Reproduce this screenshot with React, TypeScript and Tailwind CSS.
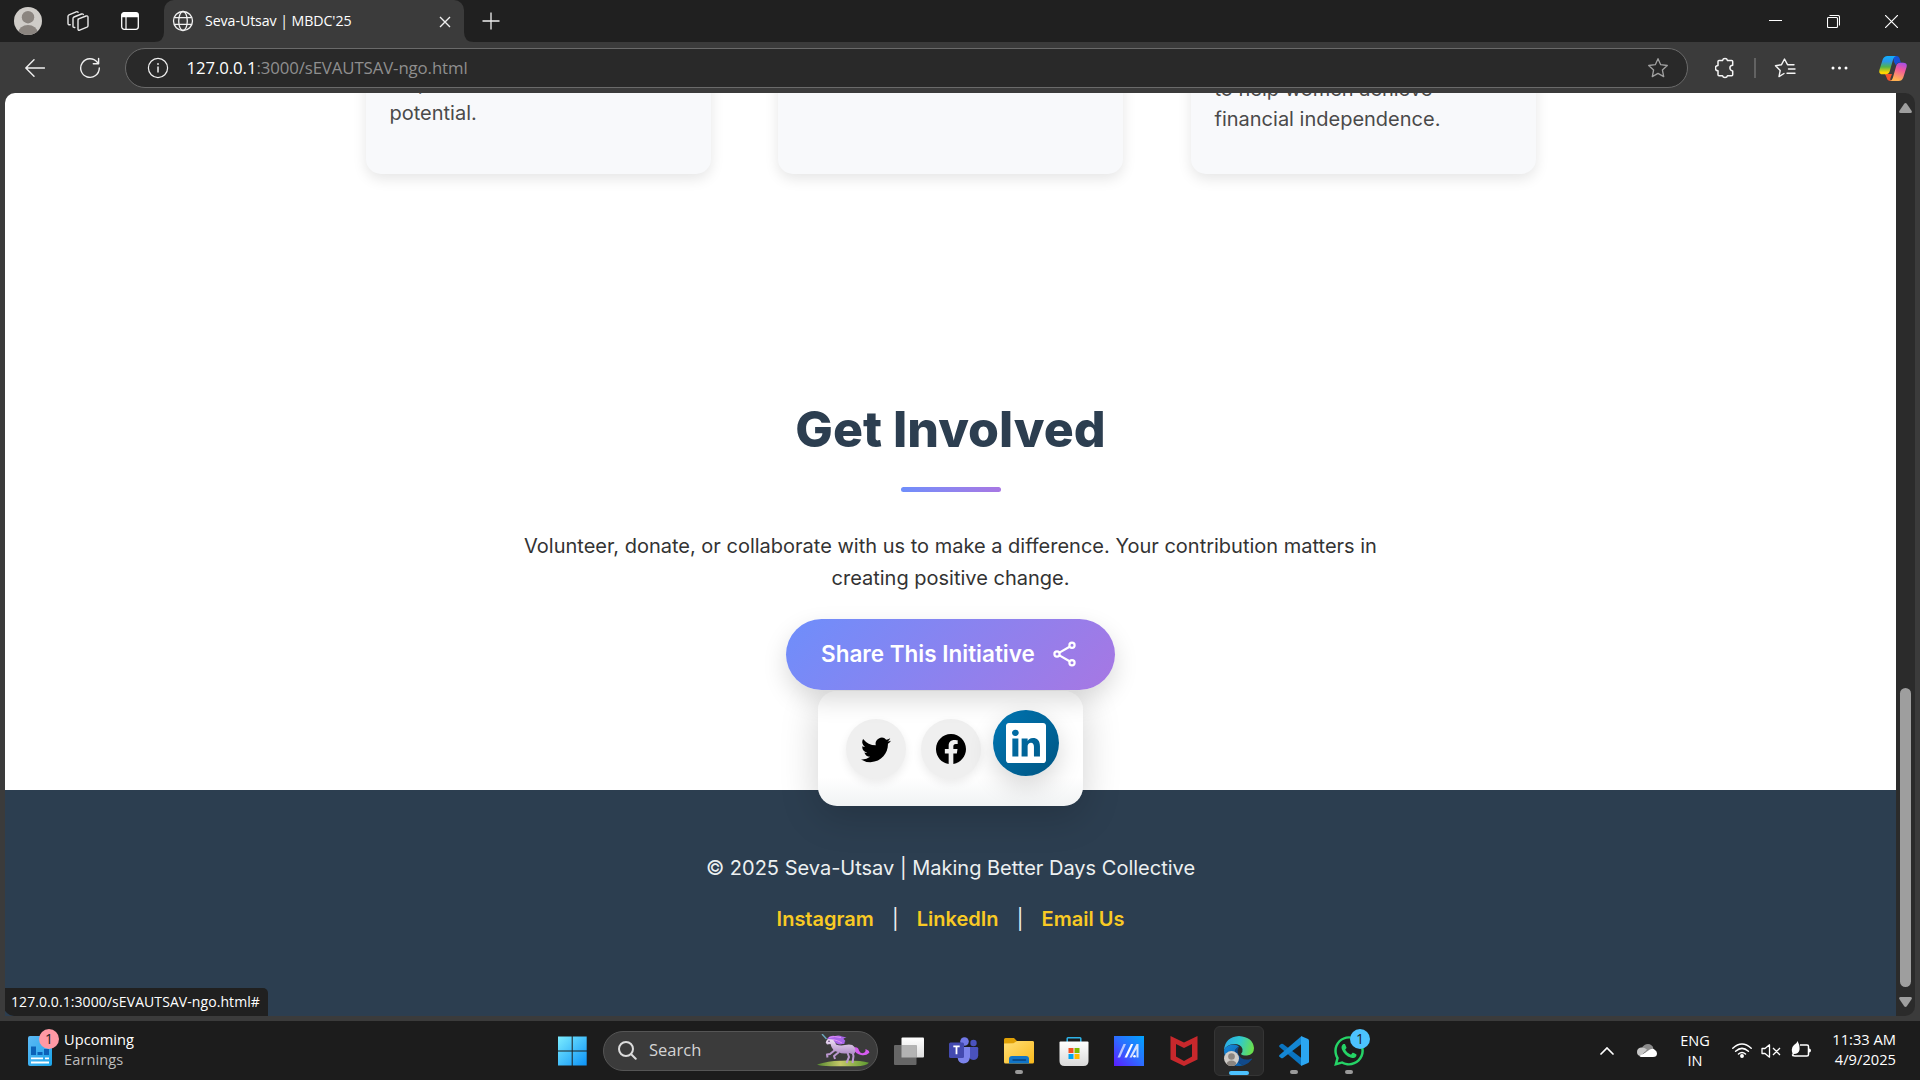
import React from "react";
import { BsTwitter, BsFacebook, BsLinkedin } from "react-icons/bs";
import { FaWhatsapp } from "react-icons/fa";

const UI = "font-['Open_Sans','Noto_Sans',sans-serif]";

function Avatar({ className }: { className: string }) {
  return (
    <svg viewBox="0 0 28 28" className={className}>
      <defs>
        <clipPath id="av">
          <circle cx="14" cy="14" r="14" />
        </clipPath>
      </defs>
      <g clipPath="url(#av)">
        <rect width="28" height="28" fill="#cfccc8" />
        <circle cx="14" cy="10.2" r="6.2" fill="#8b8580" />
        <ellipse cx="14" cy="25.5" rx="9.6" ry="7.6" fill="#8b8580" />
      </g>
    </svg>
  );
}

function WorkspacesIcon() {
  return (
    <svg viewBox="0 0 22 22" className="h-[22px] w-[22px]" fill="none" stroke="#e8e8e8" strokeWidth="1.4" strokeLinejoin="round" strokeLinecap="round">
      <path d="M11 9.2 19 6q2-.6 2 1.2v8.6q0 .9-1 1.4l-7.300 2.900q-1.700.6-1.700-1.100V10.500q0-.9.700-1.300Z" />
      <path d="M7.800 17.500q-1.800.2-1.800-1.300V8.500q0-1 1-1.500l7.500-3q1.200-.4 1.800.4" />
      <path d="M3.200 14.800Q1 15 1 13.500V6.300q0-1 1-1.500l7.200-3q1.200-.4 1.900.4" />
    </svg>
  );
}

function TabActionsIcon() {
  return (
    <svg viewBox="0 0 18 18" className="h-[18px] w-[18px]">
      <rect x=".7" y=".7" width="16.600" height="16.600" rx="2.500" fill="none" stroke="#fff" strokeWidth="1.300" />
      <path d="M.5 5.200V3Q.5.500 3 .5h12q2.500 0 2.500 2.500v2.200Z" fill="#fff" />
      <path d="M5 5v12" stroke="#fff" strokeWidth="1.200" />
    </svg>
  );
}

function GlobeIcon() {
  return (
    <svg viewBox="0 0 22 22" className="h-[22px] w-[22px]" fill="none" stroke="#f2f2f2" strokeWidth="1.300">
      <circle cx="11" cy="11" r="9.500" />
      <ellipse cx="11" cy="11" rx="4.300" ry="9.500" />
      <path d="M2.200 7.600h17.600M2.200 14.400h17.600" />
    </svg>
  );
}

function ShareIcon() {
  return (
    <svg viewBox="0 0 24 26" className="mb-px h-[26px] w-[24px]" fill="none" stroke="#fff" strokeWidth="2.200">
      <circle cx="4" cy="13" r="2.600" />
      <circle cx="19" cy="4.300" r="2.600" />
      <circle cx="19" cy="21.700" r="2.600" />
      <path d="M6.400 11.600 16.600 5.700M6.400 14.400l10.200 5.900" />
    </svg>
  );
}

function TitleBar() {
  return (
    <header className="flex h-[42px] items-start bg-[#202020]">
      <div className="flex h-[42px] w-[164px] items-center pl-[14px]">
        <Avatar className="h-[28px] w-[28px]" />
        <div className="ml-[24.500px]"><WorkspacesIcon /></div>
        <div className="ml-[32.500px]"><TabActionsIcon /></div>
      </div>
      <div className="relative flex h-[42px] w-[300px] items-center rounded-t-[10px] bg-[#3b3b3b] pl-[8px]">
        <svg viewBox="0 0 10 10" className="absolute bottom-0 -left-[10px] h-[10px] w-[10px]"><path d="M10 0v10H0Q10 10 10 0Z" fill="#3b3b3b" /></svg>
        <svg viewBox="0 0 10 10" className="absolute -right-[10px] bottom-0 h-[10px] w-[10px]"><path d="M0 0v10h10Q0 10 0 0Z" fill="#3b3b3b" /></svg>
        <GlobeIcon />
        <span className={`${UI} ml-[11px] text-[14.2px] leading-none tracking-[-0.080px] whitespace-nowrap text-white`}>Seva-Utsav | MBDC'25</span>
        <svg viewBox="0 0 12 12" className="mt-[2px] mr-[13.500px] ml-auto h-[12px] w-[12px]" stroke="#f0f0f0" strokeWidth="1.400"><path d="M1 1l10 10M11 1 1 11" /></svg>
      </div>
      <svg viewBox="0 0 18 18" className="mt-[12px] ml-[17.500px] h-[18px] w-[18px]" stroke="#f0f0f0" strokeWidth="1.300"><path d="M9 .5v17M.5 9h17" /></svg>
      <div className="mr-[22px] ml-auto flex h-[42px] items-center">
        <svg viewBox="0 0 13 13" className="h-[13px] w-[13px]" stroke="#fff" strokeWidth="1"><path d="M0 5.500h13" /></svg>
        <svg viewBox="0 0 13 13" className="ml-[45px] h-[13px] w-[13px]" fill="none" stroke="#fff" strokeWidth="1.100"><rect x=".5" y="2.500" width="10" height="10" rx="1" /><path d="M2.500.5H11q1.500 0 1.500 1.500v8.500" /></svg>
        <svg viewBox="0 0 13 13" className="ml-[45px] h-[13px] w-[13px]" stroke="#fff" strokeWidth="1.200"><path d="M0 0l13 13M13 0 0 13" /></svg>
      </div>
    </header>
  );
}

function Copilot() {
  return (
    <svg viewBox="0 0 28 27" className="h-[27px] w-[28px]">
      <defs>
        <linearGradient id="cp1" x1="0" y1="0" x2="0" y2="1">
          <stop offset="0" stopColor="#0fafff" /><stop offset=".3" stopColor="#2b96e8" /><stop offset=".6" stopColor="#52b44b" /><stop offset=".9" stopColor="#ffd400" />
        </linearGradient>
        <linearGradient id="cp2" x1="1" y1="0" x2=".7" y2="1">
          <stop offset="0" stopColor="#9a4df2" /><stop offset=".45" stopColor="#f2589c" /><stop offset="1" stopColor="#ffb152" />
        </linearGradient>
      </defs>
      <path d="M14 1h3.500q2.500 0 3.300 3l1 3.500h3q-3 .500-4.800 0-2 0-3 3L15 7Z" fill="#1650d6" />
      <path d="M6 19h7l-1.500 4q-.8 2.900 1.500 3h-1.500q-3 0-3.800-3.200Z" fill="#f4502c" />
      <path d="M8.500 1H17q-2 .3-2.800 3L10.800 16q-1 3.200-4 3.200H3.500Q-.5 19.200.4 15L3.700 4.500Q5 1 8.500 1Z" fill="url(#cp1)" />
      <path d="M19.500 26H11q2-.3 2.800-3l3.400-12q1-3.200 4-3.200h3.300q4 0 3.100 4.200l-3.300 10.500Q23 26 19.500 26Z" fill="url(#cp2)" />
    </svg>
  );
}

function Toolbar() {
  return (
    <div className="relative z-20 flex h-[51px] items-center bg-[#3b3b3b] pt-px">
      <svg viewBox="0 0 20 18" className="ml-[25px] h-[18px] w-[20px]" fill="none" stroke="#f0f0f0" strokeWidth="1.400" strokeLinecap="round" strokeLinejoin="round"><path d="M19.500 9H1M9 .8.800 9 9 17.200" /></svg>
      <svg viewBox="0 0 22 22" className="ml-[34px] h-[22px] w-[22px]" fill="none" stroke="#f0f0f0" strokeWidth="1.400" strokeLinecap="round" strokeLinejoin="round"><path d="M20.300 11a9.300 9.300 0 1 1-2-5.700L19.500 6.600M19.600 1.500v5.300h-5.300" /></svg>
      <div className="ml-[24px] flex h-[40px] w-[1563px] items-center rounded-full border border-[#6a6a6a] bg-[#292929] pl-[20.500px]">
        <svg viewBox="0 0 22 22" className="h-[22px] w-[22px]" fill="none" stroke="#f0f0f0" strokeWidth="1.200"><circle cx="11" cy="11" r="9.600" /><path d="M11 9.500v6" strokeWidth="1.500" /><circle cx="11" cy="7" r=".5" strokeWidth="1" fill="#fff" /></svg>
        <span className={`${UI} ml-[18px] text-[16.800px] leading-none tracking-[-0.100px] whitespace-nowrap text-[#8f8f8f]`}><span className="text-white">127.0.0.1</span>:3000/sEVAUTSAV-ngo.html</span>
        <svg viewBox="0 0 22 22" className="mr-[18.500px] ml-auto h-[22px] w-[22px]" fill="none" stroke="#a0a0a0" strokeWidth="1.300" strokeLinejoin="round"><path d="m11 1.700 2.700 6 6.600.8-4.900 4.500 1.300 6.600L11 16.400l-5.700 3.200L6.600 13 1.700 8.500l6.600-.8Z" /></svg>
      </div>
      <svg viewBox="0 0 20 22" className="ml-[27px] h-[22px] w-[20px]" fill="none" stroke="#f5f5f5" strokeWidth="1.500" strokeLinejoin="round"><path d="M4 3.500h3.500a2.600 2.600 0 0 1 5 0h4.200q1 0 1 1v3.800a2.800 2.800 0 0 0 0 5.600v3.800q0 1-1 1h-4.200a2.600 2.600 0 0 1-5 0H4q-1 0-1-1v-4a2.600 2.600 0 0 1 0-5.200v-4q0-1 1-1Z" /></svg>
      <div className="ml-[19px] h-[20px] w-[2px] bg-[#626262]" />
      <svg viewBox="0 0 22 22" className="ml-[18px] h-[22px] w-[22px]" fill="none" stroke="#f5f5f5" strokeWidth="1.400" strokeLinejoin="round" strokeLinecap="round"><path d="M10 16.500 5 19.600 6.200 13.500 1.500 8.700l6-1L10.500 2l3 5.700h6.500M14.500 12H21M13 16.200h8" /></svg>
      <svg viewBox="0 0 18 4" className="ml-[35px] h-[4px] w-[18px]" fill="#fff"><circle cx="2" cy="2" r="1.500" /><circle cx="8.500" cy="2" r="1.500" /><circle cx="15" cy="2" r="1.500" /></svg>
      <div className="ml-[30px]"><Copilot /></div>
    </div>
  );
}

function Card({ children }: { children?: React.ReactNode }) {
  return (
    <div className="flex h-[181px] w-[345px] flex-col justify-end rounded-[15px] bg-[#f8f9fb] px-[24px] text-[20px] leading-[30px] text-[#4a4a4a] shadow-[0_5px_14px_rgba(0,0,0,0.100)]">
      {children}
    </div>
  );
}

function Page() {
  return (
    <main className="relative flex h-[923px] w-[1891px] flex-col overflow-hidden rounded-tl-[10px] bg-white font-['Inter',sans-serif]">
      <section className="flex h-[81px] shrink-0 items-end justify-center gap-[67.500px]">
        <Card><p className="pb-[46px]">help reach their full<br />potential.</p></Card>
        <Card />
        <Card><p className="pb-[40px]">to help women achieve<br />financial independence.</p></Card>
      </section>
      <section className="flex h-[616px] shrink-0 flex-col items-center pt-[215px]">
        <h2 className="text-[50px] leading-[80px] font-extrabold text-[#2c3e50]">Get Involved</h2>
        <div className="mt-[18px] h-[5px] w-[100px] shrink-0 rounded-full bg-gradient-to-r from-[#6e8efb] to-[#a777e3]" />
        <p className="mt-[38px] w-[875px] shrink-0 text-center text-[20px] leading-[32px] text-[#333]">Volunteer, donate, or collaborate with us to make a difference. Your contribution matters in creating positive change.</p>
        <div className="relative z-10 mt-[25px] flex shrink-0 flex-col items-center">
          <button className="relative z-10 flex h-[71px] w-[329px] items-center rounded-full bg-linear-[135deg] from-[#6e8efb] to-[#a777e3] pl-[35px] text-white shadow-[0_10px_25px_rgba(0,0,0,0.150)]">
            <span className="text-[22.500px] leading-none font-semibold whitespace-nowrap">Share This Initiative</span>
            <span className="mr-[38px] ml-auto"><ShareIcon /></span>
          </button>
          <div className="mt-px mr-px flex h-[115px] w-[265px] items-center gap-[15px] rounded-[19px] bg-gradient-to-b from-white from-75% to-[#f1f3f4] pl-[28px] shadow-[0_10px_38px_rgba(0,0,0,0.180)]">
            <span className="flex h-[60px] w-[60px] items-center justify-center rounded-full bg-[#efefef] text-black shadow-[0_4px_10px_rgba(0,0,0,0.080)]"><BsTwitter className="h-[30px] w-[30px]" /></span>
            <span className="flex h-[60px] w-[60px] items-center justify-center rounded-full bg-[#efefef] text-black shadow-[0_4px_10px_rgba(0,0,0,0.080)]"><BsFacebook className="h-[30px] w-[30px]" /></span>
            <span className="-mx-[3px] mb-[12px] flex h-[66px] w-[66px] items-center justify-center rounded-full bg-gradient-to-br from-[#0077b5] to-[#005582] text-white shadow-[0_10px_26px_rgba(0,0,0,0.160)]"><BsLinkedin className="h-[40px] w-[40px]" /></span>
          </div>
        </div>
      </section>
      <footer className="flex h-[226px] shrink-0 flex-col items-center bg-[#2c3e50] pt-[62px] text-[20px] leading-[32px] text-[#ecf0f1]">
        <p>© 2025 Seva-Utsav | Making Better Days Collective</p>
        <div className="mt-[19px] flex font-semibold text-[#f9ca24]">
          <span>Instagram</span>
          <span className="w-[43px] text-center font-normal text-[#ecf0f1]">|</span>
          <span>LinkedIn</span>
          <span className="w-[43px] text-center font-normal text-[#ecf0f1]">|</span>
          <span>Email Us</span>
        </div>
      </footer>
      <div className={`${UI} absolute bottom-0 -left-px flex h-[28px] w-[264px] items-center rounded-tr-[5px] rounded-bl-[10px] bg-[#202020] pb-[2px] pl-[7px] text-[14px] tracking-[0.080px] whitespace-nowrap text-white`}>127.0.0.1:3000/sEVAUTSAV-ngo.html#</div>
    </main>
  );
}

function Scrollbar() {
  return (
    <aside className="flex w-[19px] flex-col items-center rounded-r-[10px] bg-[#2b2b2b]">
      <svg viewBox="0 0 13 10" className="mt-[10px] h-[10px] w-[13px]" fill="#9e9e9e"><path d="M5.200.8q1.300-1.500 2.600 0L12.700 8q.6 2-1.200 2h-10Q-.3 10 .3 8Z" /></svg>
      <div className="mt-[575px] h-[299px] w-[11px] rounded-full bg-[#9e9e9e]" />
      <svg viewBox="0 0 13 10" className="mt-[10px] h-[10px] w-[13px]" fill="#9e9e9e"><path d="M5.200 9.200q1.300 1.500 2.600 0L12.700 2q.6-2-1.200-2h-10Q-.3 0 .3 2Z" /></svg>
    </aside>
  );
}

function Unicorn() {
  return (
    <svg viewBox="0 0 53 33" className="h-[33px] w-[53px]">
      <defs>
        <linearGradient id="uh" x1="0" y1="0" x2="0" y2="1"><stop offset="0" stopColor="#f3e6f6" /><stop offset="1" stopColor="#b08cc8" /></linearGradient>
        <linearGradient id="ug" x1="0" y1="0" x2="1" y2="0"><stop offset="0" stopColor="#55892f" /><stop offset=".45" stopColor="#c6c868" /><stop offset="1" stopColor="#5b9a2f" /></linearGradient>
      </defs>
      <path d="M0 30.500Q12 26.500 24 26.700 42 26 52 28.800q-3 3.400-13 3.400H14Q3 32.200 0 30.500Z" fill="url(#ug)" />
      <path d="M37 13.500q4-1 5 3 1.500 4 5.500 2 1.500-1 1-3.500 4.500 2 3.500 3 1 1 0 1-3 3-8 2-5-1-7-5Z" fill="#d65cf0" />
      <path d="M18 16 13 20l-3 .5.500 3M22 18l-5 4 1 3M30 17l2 6-2.500 6M35 16l1.500 6-1 7" stroke="#bb98d0" strokeWidth="2" fill="none" strokeLinejoin="round" />
      <path d="M9.500 6.500Q12 3 15 4.500q3 1.500 4 6 4 1.500 9 .6 7-1.600 9.500 1.900 2 4-.5 7-2 .5-5-1-6 1.500-11-1-6-1-7.500-8l-3.500.5-1.300-2Z" fill="url(#uh)" />
      <path d="M10 5Q13 1 18 2q4-1 7 .5 3 0 4.500 1.500-3-.5-3 1 3 2 1 3 1 2-2 2-3 1-6-.5Q17 7.500 16 5.500Z" fill="#a866e8" />
      <path d="M12 3.500q5-2 12 0M16 5.500q5 1 9 3.500" stroke="#e290f5" strokeWidth="1" fill="none" />
      <path d="m5 0 4.500 5" stroke="#6ca8bd" strokeWidth="1.400" />
      <circle cx="12" cy="7.300" r=".8" fill="#4c2865" />
    </svg>
  );
}

function Teams() {
  return (
    <svg viewBox="0 0 30 27" className="h-[27px] w-[30px]">
      <circle cx="24.500" cy="6" r="3.200" fill="#4a52bd" />
      <circle cx="15.500" cy="4.500" r="4.300" fill="#7178e6" />
      <path d="M20 10h8q1.200 0 1.200 1.200v7Q29 22.500 25 23q-4 0-5-3Z" fill="#4a52bd" />
      <path d="M9 10h12v10q-.8 6.500-6.500 6.500Q9 26 8.500 20Z" fill="#7b83eb" />
      <rect y="5.500" width="15" height="15.500" rx="1.500" fill="#434ab0" />
      <path d="M4.300 9.300h6.400M7.500 9.300v8" stroke="#fff" strokeWidth="1.800" />
    </svg>
  );
}

function Explorer() {
  return (
    <svg viewBox="0 0 30 27" className="h-[27px] w-[30px]">
      <defs><linearGradient id="fo" x1="0" y1="0" x2="1" y2="1"><stop offset="0" stopColor="#ffdf76" /><stop offset="1" stopColor="#f9b91c" /></linearGradient></defs>
      <path d="M0 2.500Q0 1 1.500 1H10l3 3h15q2 0 2 2v3H0Z" fill="#dfa006" />
      <path d="M0 6.500 9.500 6.300 13 4h15.500Q30 4 30 5.500V25q0 1.500-1.500 1.500h-27Q0 26.500 0 25Z" fill="url(#fo)" />
      <path d="M5 26.500V22q0-3 3-3h14q3 0 3 3v4.500Z" fill="#1175c8" />
      <path d="M9 23h12.500" stroke="#07427c" strokeWidth="1.300" strokeLinecap="round" />
    </svg>
  );
}

function Store() {
  return (
    <svg viewBox="0 0 30 30" className="h-[30px] w-[30px]">
      <defs><linearGradient id="st" x1="0" y1="0" x2="0" y2="1"><stop offset="0" stopColor="#fff" /><stop offset="1" stopColor="#d9d9d9" /></linearGradient></defs>
      <path d="M8.200 6V2.600q0-.8.800-.8h12q.8 0 .8.800V6" fill="none" stroke="#2eb3e8" strokeWidth="1.500" />
      <path d="M.5 6.500Q.5 5.500 1.500 5.500h27q1 0 1 1V25q0 5-5 5h-19q-5 0-5-5Z" fill="url(#st)" />
      <path d="M9.500 12h5v5h-5Z" fill="#f25022" /><path d="M15.500 12h5v5h-5Z" fill="#7fba00" /><path d="M9.500 18h5v5h-5Z" fill="#00a4ef" /><path d="M15.500 18h5v5h-5Z" fill="#ffb900" />
    </svg>
  );
}

function MyAsus() {
  return (
    <svg viewBox="0 0 30 30" className="h-[30px] w-[30px]">
      <defs>
        <linearGradient id="ma" x1="0" y1="1" x2="1" y2="0"><stop offset="0" stopColor="#5a1cff" /><stop offset=".5" stopColor="#2d6cff" /><stop offset="1" stopColor="#00a5ff" /></linearGradient>
      </defs>
      <rect width="30" height="30" fill="url(#ma)" />
      <path d="M3.500 21.500 9.500 8h2.500L6 21.500Z" fill="#b9c8ff" />
      <path d="M10.500 21.500 17 8h2.300L13 21.500Z" fill="#fff" />
      <path d="m15.500 21.500 7-13.500h2v13.500h-2V13l-4.800 8.500Z" fill="#d5e2ff" /><circle cx="20.500" cy="20.200" r="1.300" fill="#fff" />
    </svg>
  );
}

function Edge() {
  return (
    <svg viewBox="0 0 30 30" className="h-[30px] w-[30px]">
      <defs>
        <linearGradient id="e1" x1="0" y1=".3" x2="1" y2=".5"><stop offset="0" stopColor="#2aa9e8" /><stop offset=".5" stopColor="#2fc9cf" /><stop offset="1" stopColor="#6be04a" /></linearGradient>
        <linearGradient id="e2" x1="0" y1="0" x2="1" y2="1"><stop offset="0" stopColor="#1389dc" /><stop offset="1" stopColor="#0c59a4" /></linearGradient>
      </defs>
      <path d="M0 14Q1 1 15 0q14 1 15 12 0 7-7 7.500-5 0-6-1.500 2-2 1.500-5Q17 8 10 8 3 8.500 0 14Z" fill="url(#e1)" />
      <path d="M0 14Q3 8.500 10 8.500q3.500.3 5 2-4.500 2.500-4.500 7Q11 27 20 29.200 10 32 4 25.500 0 21 0 14Z" fill="url(#e2)" />
      <path d="M15 10.500q-5 2.500-4.500 7Q11 27 20 29.200q5-1.700 8-6 0-1-1-.5-5 2-10-.700Q11.500 17 15 10.500Z" fill="#114a8b" />
    </svg>
  );
}

function AppSlot({ children, dot }: { children: React.ReactNode; dot?: boolean }) {
  return (
    <div className="relative flex h-[59px] w-[55px] items-center justify-center">
      {children}
      {dot && <span className="absolute bottom-[6px] left-[23.500px] h-[4px] w-[8px] rounded-full bg-[#9a9a9a]" />}
    </div>
  );
}

function Taskbar() {
  return (
    <footer className={`${UI} flex h-[59px] items-center bg-[#1c1c1c] text-white`}>
      <div className="flex w-[557px] items-center pl-[28px]">
        <div className="relative">
          <svg viewBox="0 0 24 30" className="h-[30px] w-[24px]">
            <defs><linearGradient id="wd" x1="0" y1="0" x2="1" y2="1"><stop offset="0" stopColor="#5db9f5" /><stop offset="1" stopColor="#1aa5ea" /></linearGradient></defs>
            <rect width="24" height="30" rx="2" fill="url(#wd)" />
            <path d="M3 10.500h5V19H3ZM9.500 16h5v3h-5ZM16 13h5v6h-5Z" fill="#0c62b8" />
            <path d="M3 22.300h12M17 22.300h4M3 26.500h18" stroke="#fff" strokeWidth="1.800" />
          </svg>
          <span className="absolute -top-[7px] left-[11px] flex h-[20px] w-[20px] items-center justify-center rounded-full bg-[#ff99a4] text-[14px] leading-none text-[#222]">1</span>
        </div>
        <div className="-mt-[4px] ml-[12px] text-[14.600px] leading-[20px] tracking-[0.080px]">
          <div>Upcoming</div>
          <div className="text-[#bdbdbd]">Earnings</div>
        </div>
      </div>
      <svg viewBox="0 0 30 30" className="h-[30px] w-[30px]">
        <defs><linearGradient id="wn" gradientUnits="userSpaceOnUse" x1="0" y1="0" x2="30" y2="30"><stop offset="0" stopColor="#7fefff" /><stop offset="1" stopColor="#0a91f7" /></linearGradient></defs>
        <path d="M1 .5h13.700V14.500H1ZM15.700.5h14v14h-14ZM1 15.500h13.700v14H1ZM15.700 15.500h14v14h-14Z" fill="url(#wn)" />
      </svg>
      <div className="ml-[16px] flex h-[40px] w-[275px] items-center rounded-full border border-[#555] bg-[#3b3b3b] pl-[14px]">
        <svg viewBox="0 0 19 19" className="h-[19px] w-[19px]" fill="none" stroke="#dcdcdc" strokeWidth="2" strokeLinecap="round"><circle cx="8" cy="8" r="7" /><path d="m13.200 13.200 4.500 4.500" /></svg>
        <span className="ml-[12px] text-[16.500px] tracking-[0px] text-[#d4d4d4]">Search</span>
        <div className="mr-[7px] ml-auto"><Unicorn /></div>
      </div>
      <div className="ml-[3px] flex">
        <AppSlot>
          <svg viewBox="0 0 30 28" className="h-[28px] w-[30px]">
            <defs><linearGradient id="tv" x1="0" y1="0" x2="0" y2="1"><stop offset="0" stopColor="#fff" /><stop offset="1" stopColor="#dedede" /></linearGradient></defs>
            <rect x="7.500" y=".5" width="22.500" height="20" rx="1" fill="url(#tv)" />
            <rect x="0" y="8" width="22.500" height="20" rx="1" fill="#666" />
            <rect x="7.500" y="8" width="15" height="12.500" fill="#b3b3b3" />
          </svg>
        </AppSlot>
        <AppSlot><Teams /></AppSlot>
        <AppSlot dot><Explorer /></AppSlot>
        <AppSlot><Store /></AppSlot>
        <AppSlot><MyAsus /></AppSlot>
        <AppSlot>
          <svg viewBox="0 0 28 30" className="h-[30px] w-[28px]"><path d="M.5 0 14 6.500 27.500 0v23.500L14 30 .5 23.500ZM6 8v12.500l8 4.500 8-4.500V8l-8 4Z" fill="#c8282c" fillRule="evenodd" /></svg>
        </AppSlot>
        <AppSlot>
          <div className="relative flex h-[50px] w-[50px] shrink-0 items-center justify-center rounded-[6px] border border-[#353535] bg-[#292929]">
            <Edge />
            <Avatar className="absolute top-[24px] left-[9px] h-[15px] w-[15px]" />
            <span className="absolute bottom-0 left-[14px] h-[4px] w-[20px] rounded-full bg-[#4cc2ff]" />
          </div>
        </AppSlot>
        <AppSlot dot>
          <svg viewBox="0 0 30 30" className="h-[30px] w-[30px]">
            <path d="M.3 9.500 2 8q1-.7 2 0l19 14.500-1 7L.5 11q-.7-.8-.2-1.500Z" fill="#0a74c0" />
            <path d="M.3 20.500 2 22q1 .7 2 0L23 7.500 22 .5.500 19q-.7.800-.2 1.500Z" fill="#1487d4" />
            <path d="M22 0 29 3q1 .5 1 1.500v21q0 1-1 1.500l-7 3Z" fill="#2ba6f2" />
          </svg>
        </AppSlot>
        <AppSlot dot>
          <FaWhatsapp className="h-[34px] w-[34px] text-[#25d366]" />
          <span className="absolute top-[8px] left-[29px] flex h-[20px] w-[20px] items-center justify-center rounded-full bg-[#4cc2ff] text-[14px] leading-none text-[#222]">1</span>
        </AppSlot>
      </div>
      <div className="mr-[24px] ml-auto flex items-center">
        <svg viewBox="0 0 14 8" className="h-[8px] w-[14px]" fill="none" stroke="#fff" strokeWidth="1.700" strokeLinecap="round"><path d="m1 7 6-6 6 6" /></svg>
        <svg viewBox="0 0 20 13" className="ml-[23px] h-[13px] w-[20px]">
          <path d="M5 4Q7 0 11 0t5.500 4.500L12 8 5 9Z" fill="#8b8b8b" /><path d="M4 3.500q3-.5 6 2L4 12q-4 0-4-4t4-4.500Z" fill="#c6c6c6" /><path d="M2.500 12 10 7.500q5-4.500 8-1.500 2 1 2 3.500 0 3.500-4 3.500H4.500Q3 13 2.500 12Z" fill="#fff" />
        </svg>
        <div className="ml-[22px] w-[32px] text-center text-[14.500px] leading-[20px] tracking-[0px]">ENG<br />IN</div>
        <svg viewBox="0 0 20 15" className="ml-[21px] h-[15px] w-[20px]" fill="none" stroke="#fff" strokeWidth="1.500" strokeLinecap="round"><path d="M.8 5.200q9.200-8.400 18.400 0M3.600 8.300q6.400-5.800 12.800 0M6.500 11q3.500-3 7 0" /><circle cx="10" cy="13" r="1.200" fill="#fff" /></svg>
        <svg viewBox="0 0 20 14" className="ml-[9px] h-[14px] w-[20px]" fill="none" stroke="#fff" strokeWidth="1.300" strokeLinejoin="round"><path d="M1 4.500h3L8.500.8v12.400L4 9.500H1ZM12 4l7 7M19 4l-7 7" /></svg>
        <svg viewBox="0 0 20 17" className="-mt-[3px] ml-[10px] h-[17px] w-[20px]"><path d="M9 4h7q1.500 0 1.500 1.500v8q0 1.500-1.500 1.500H4q-2.500 0-2.500-1.500" fill="none" stroke="#fff" strokeWidth="1.500" /><path d="M18 7.500q2 0 2 2t-2 2Z" fill="#fff" /><path d="M6.500 0Q9 4 8.500 9 7.500 13 3 13l-2 2.500.5-3Q-.5 7 3 4 6 2.500 6.500 0Z" fill="#fff" /></svg>
        <div className="-mt-[4px] ml-[20px] w-[65px] text-right text-[14.700px] leading-[20px] tracking-[0px] whitespace-nowrap">11:33 AM<br />4/9/2025</div>
      </div>
    </footer>
  );
}

export default function App() {
  return (
    <div className="flex h-[1080px] w-[1920px] flex-col overflow-hidden bg-[#3b3b3b]">
      <TitleBar />
      <Toolbar />
      <div className="flex h-[923px] pl-[5px]">
        <Page />
        <Scrollbar />
      </div>
      <div className="h-[5px] bg-[#3b3b3b]" />
      <Taskbar />
    </div>
  );
}
